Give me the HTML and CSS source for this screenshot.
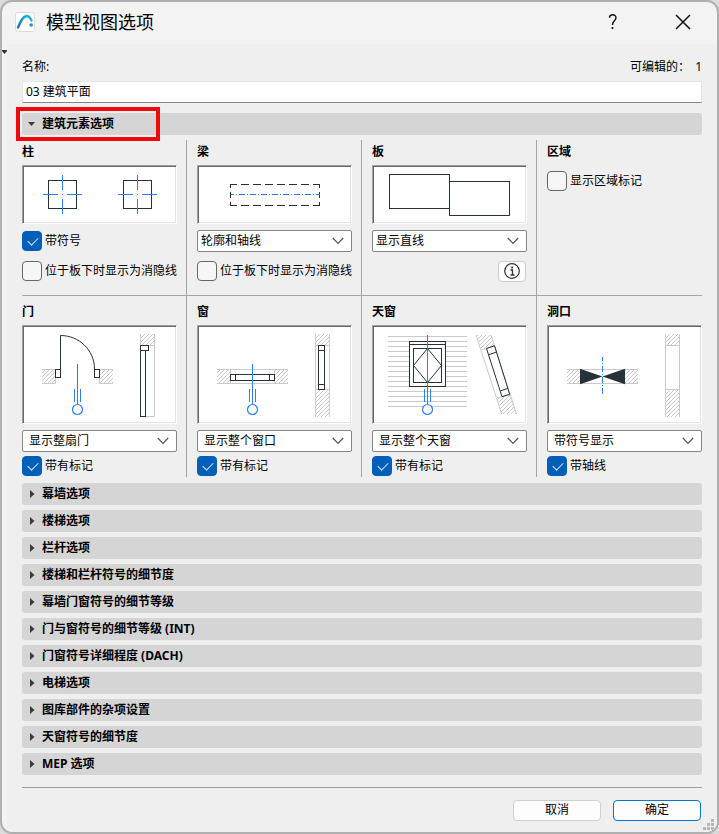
FILE: index.html
```html
<!DOCTYPE html>
<html lang="zh-CN">
<head>
<meta charset="utf-8">
<meta name="viewport" content="width=device-width, initial-scale=1">
<title>模型视图选项</title>
<link rel="stylesheet" href="styles.css">
</head>
<body>
<svg class="defs" aria-hidden="true">
  <defs>
    <pattern id="hatch" width="4" height="4" patternUnits="userSpaceOnUse">
      <path d="M-1 1 1 -1M0 4 4 0M3 5 5 3" stroke="#c8c8c8" stroke-width="1" fill="none"/>
    </pattern>
    <symbol id="chevron" viewBox="0 0 12 8"><path d="M.8 1 6 6.4 11.2 1" fill="none" stroke="#555" stroke-width="1.2"/></symbol>
    <symbol id="right" viewBox="0 0 5 8"><path d="M0 0 4.5 4 0 8z" fill="#3c3c3c"/></symbol>
    <symbol id="handle" viewBox="0 0 20 60">
      <path d="M10.5 5V45M7.5 30V43M13.5 30V43" fill="none" stroke="#2a7fff"/>
      <circle cx="10.5" cy="50.5" r="5" fill="#fff" stroke="#2a7fff" stroke-width="1.2"/>
    </symbol>
  </defs>
</svg>
<main class="window">
  <header class="titlebar">
    <svg class="logo" viewBox="0 0 20 20" aria-hidden="true">
      <defs><linearGradient id="arc" x1="0" y1="1" x2="1" y2="0"><stop offset="0" stop-color="#176fc0"/><stop offset="1" stop-color="#1fc0de"/></linearGradient></defs>
      <rect x=".5" y=".5" width="19" height="19" rx="2" fill="#fff" stroke="#dcdcdc"/>
      <path d="M3 15.5C5.5 9.500 7.5 4.5 11.5 4C14.5 4 15.5 6 16.5 8.5" fill="none" stroke="url(#arc)" stroke-width="2.4" stroke-linecap="round"/>
      <circle cx="16.2" cy="13" r="1.8" fill="#1e8fd0"/>
    </svg>
    <h1>模型视图选项</h1>
    <button class="caption" type="button" aria-label="帮助"><svg width="10" height="16" viewBox="0 0 10 16"><path d="M1.5 3.8C1.5 -.2 8 -.2 8 3.7C8 6.8 4.5 7 4.5 11" fill="none" stroke="#111" stroke-width="1.4"/><circle cx="4.5" cy="14" r="1.1" fill="#111"/></svg></button>
    <button class="caption close" type="button" aria-label="关闭"><svg width="16" height="16" viewBox="0 0 16 16"><path d="M1 1 15 15M15 1 1 15" stroke="#111" stroke-width="1.5"/></svg></button>
  </header>
  <div class="content">
    <svg class="edge-mark" viewBox="0 0 5 4" aria-hidden="true"><path d="M0 0H5V1L2.5 4 0 1z" fill="#333"/></svg>
    <div class="name-row"><label for="name">名称:</label><span>可编辑的：<b>1</b></span></div>
    <input id="name" class="name" type="text" value="03 建筑平面">

    <h2 class="bar first"><button type="button" aria-expanded="true"><svg class="down" viewBox="0 0 7 4"><path d="M0 0H7L3.5 4z" fill="#3c3c3c"/></svg>建筑元素选项</button><span class="highlight"></span></h2>

    <div class="grid">
      <section class="cell">
        <h3>柱</h3>
        <svg class="preview" viewBox="2 2 151 55" fill="none" stroke="#263238">
          <rect x="26.5" y="15.5" width="28" height="28"/><rect x="101.5" y="15.5" width="28" height="28"/>
          <path d="M21 29.5H36M40 29.5H41M45 29.5H60M40.5 10V25M40.5 34V49M96 29.5H111M115 29.5H116M120 29.5H135M115.5 10V25M115.5 34V49" stroke="#2a7fff"/>
        </svg>
        <label class="check"><input type="checkbox" checked>带符号</label>
        <label class="check"><input type="checkbox">位于板下时显示为消隐线</label>
      </section>
      <section class="cell">
        <h3>梁</h3>
        <svg class="preview" viewBox="2 2 151 55" fill="none" stroke="#263238">
          <path d="M33 19.5H123M33 40.5H123" stroke-dasharray="8 4" stroke-dashoffset="1"/>
          <path d="M33.5 19V23M33.5 27V33M33.5 37V41M122.5 19V23M122.5 27V33M122.5 37V41"/>
          <path d="M34 29.5H123" stroke="#2a7fff" stroke-dasharray="6 2 1 2" stroke-dashoffset="3"/>
        </svg>
        <div class="select"><select aria-label="梁"><option>轮廓和轴线</option></select><svg><use href="#chevron"/></svg></div>
        <label class="check"><input type="checkbox">位于板下时显示为消隐线</label>
      </section>
      <section class="cell">
        <h3>板</h3>
        <svg class="preview" viewBox="2 2 151 55" fill="none" stroke="#263238">
          <rect x="17.5" y="9.5" width="60" height="34"/><rect x="77.5" y="16.5" width="60" height="34"/>
        </svg>
        <div class="select"><select aria-label="板"><option>显示直线</option></select><svg><use href="#chevron"/></svg></div>
        <button class="info" type="button" aria-label="信息"><svg viewBox="0 0 16 16"><circle cx="8" cy="8" r="7.3" fill="none" stroke="#263238" stroke-width="1.2"/><path d="M6.5 7H8.5V12M6.5 12H10.5" fill="none" stroke="#263238" stroke-width="1.3"/><rect x="7.2" y="3.6" width="1.8" height="1.8" fill="#263238"/></svg></button>
      </section>
      <section class="cell">
        <h3>区域</h3>
        <label class="check zone"><input type="checkbox">显示区域标记</label>
      </section>
    </div>
    <div class="rule"></div>
    <div class="grid second">
      <section class="cell">
        <h3>门</h3>
        <svg class="preview" viewBox="2 2 151 95" fill="none" stroke="#263238">
          <g stroke="none" fill="url(#hatch)"><rect x="20" y="44" width="13" height="15"/><rect x="78" y="44" width="13" height="15"/><rect x="118" y="9" width="15" height="11"/></g>
          <path d="M20 44.5H33M20 58.5H33.5V53M91 44.5H78M91 58.5H77.5V53M118.5 9V20M132.5 9V91.5H123M126 20.5H132" stroke="#cacaca"/>
          <path d="M38.5 44V10.5C57 10.5 72.5 25 72.5 44"/>
          <rect x="33.5" y="44.5" width="5" height="8"/><rect x="72.5" y="44.5" width="5" height="8"/>
          <rect x="118.5" y="20.5" width="8" height="5"/><rect x="118.5" y="25.5" width="5" height="66"/>
          <use href="#handle" x="45" y="34" width="20" height="60"/>
        </svg>
        <div class="select inset"><select aria-label="门"><option>显示整扇门</option></select><svg><use href="#chevron"/></svg></div>
        <label class="check"><input type="checkbox" checked>带有标记</label>
      </section>
      <section class="cell">
        <h3>窗</h3>
        <svg class="preview" viewBox="2 2 151 95" fill="none" stroke="#263238">
          <g stroke="none" fill="url(#hatch)"><rect x="20" y="44" width="13" height="15"/><rect x="78" y="44" width="13" height="15"/><rect x="118" y="9" width="15" height="11"/><rect x="118" y="65" width="15" height="27"/></g>
          <path d="M20 44.5H91M20 58.5H91M33.5 44V59M77.5 44V59M118.5 9V92M132.5 9V92M118 20.5H133M118 64.5H133" stroke="#cacaca"/>
          <rect x="33.5" y="49.5" width="44" height="6"/><path d="M38.5 49V56M72.5 49V56"/>
          <rect x="121.5" y="20.5" width="6" height="44"/><path d="M121 25.5H128M121 59.5H128"/>
          <use href="#handle" x="45" y="34" width="20" height="60"/>
        </svg>
        <div class="select inset"><select aria-label="窗"><option>显示整个窗口</option></select><svg><use href="#chevron"/></svg></div>
        <label class="check"><input type="checkbox" checked>带有标记</label>
      </section>
      <section class="cell">
        <h3>天窗</h3>
        <svg class="preview" viewBox="2 2 151 95" fill="none" stroke="#263238">
          <path d="M16 11.5H95M16 16.5H95M16 21.5H95M16 26.5H95M16 31.5H95M16 36.5H95M16 41.5H95M16 46.5H95M16 51.5H95M16 56.5H95M16 61.5H95M16 66.5H95M16 71.5H95M16 76.5H95M16 81.5H95" stroke="#cacaca"/>
          <rect x="37.5" y="16.5" width="36" height="45" fill="#fff"/><path d="M37 19.5H74"/><rect x="41.5" y="23.5" width="28" height="34"/>
          <path d="M55.5 23.5 69.5 40.5 55.5 57.5 41.5 40.5z"/>
          <path d="M104 10H119L122.5 20.7 110 25zM125 73 137.7 69.5 144.5 89H129.7z" fill="url(#hatch)" stroke="none"/>
          <path d="M104 10 129.7 89M119 10 144.5 89M110 25 122.5 20.7M125 73 137.7 69.5" stroke="#cacaca"/>
          <path d="M114.5 23.5 122.5 20.7 137.7 69.3 130 71.7zM116.7 29.7 124.7 27M128.3 66 136 63.3"/>
          <path d="M55.5 10V40" stroke="#2a7fff"/>
          <use href="#handle" x="45" y="34" width="20" height="60"/>
        </svg>
        <div class="select inset"><select aria-label="天窗"><option>显示整个天窗</option></select><svg><use href="#chevron"/></svg></div>
        <label class="check"><input type="checkbox" checked>带有标记</label>
      </section>
      <section class="cell">
        <h3>洞口</h3>
        <svg class="preview" viewBox="2 2 151 95" fill="none" stroke="#263238">
          <g stroke="none" fill="url(#hatch)"><rect x="20" y="44" width="13" height="15"/><rect x="78" y="44" width="13" height="15"/><rect x="118" y="9" width="15" height="11"/><rect x="118" y="65" width="15" height="27"/></g>
          <path d="M20 44.5H91M20 58.5H91M118.5 9V92M132.5 9V92M118 20.5H133M118 64.5H133" stroke="#cacaca"/>
          <path d="M33 43.7 55.5 51.5 33 59.2zM78 43.7 55.5 51.5 78 59.2z" fill="#263238" stroke="none"/>
          <path d="M55.5 32V71" stroke="#2a7fff" stroke-dasharray="6 2 1 2" stroke-dashoffset="2"/>
        </svg>
        <div class="select inset"><select aria-label="洞口"><option>带符号显示</option></select><svg><use href="#chevron"/></svg></div>
        <label class="check"><input type="checkbox" checked>带轴线</label>
      </section>
    </div>

    <div class="bars">
      <h2 class="bar"><button type="button" aria-expanded="false"><svg class="right"><use href="#right"/></svg>幕墙选项</button></h2>
      <h2 class="bar"><button type="button" aria-expanded="false"><svg class="right"><use href="#right"/></svg>楼梯选项</button></h2>
      <h2 class="bar"><button type="button" aria-expanded="false"><svg class="right"><use href="#right"/></svg>栏杆选项</button></h2>
      <h2 class="bar"><button type="button" aria-expanded="false"><svg class="right"><use href="#right"/></svg>楼梯和栏杆符号的细节度</button></h2>
      <h2 class="bar"><button type="button" aria-expanded="false"><svg class="right"><use href="#right"/></svg>幕墙门窗符号的细节等级</button></h2>
      <h2 class="bar"><button type="button" aria-expanded="false"><svg class="right"><use href="#right"/></svg>门与窗符号的细节等级 (INT)</button></h2>
      <h2 class="bar"><button type="button" aria-expanded="false"><svg class="right"><use href="#right"/></svg>门窗符号详细程度 (DACH)</button></h2>
      <h2 class="bar"><button type="button" aria-expanded="false"><svg class="right"><use href="#right"/></svg>电梯选项</button></h2>
      <h2 class="bar"><button type="button" aria-expanded="false"><svg class="right"><use href="#right"/></svg>图库部件的杂项设置</button></h2>
      <h2 class="bar"><button type="button" aria-expanded="false"><svg class="right"><use href="#right"/></svg>天窗符号的细节度</button></h2>
      <h2 class="bar"><button type="button" aria-expanded="false"><svg class="right"><use href="#right"/></svg>MEP 选项</button></h2>
    </div>
    <footer class="footer">
      <button type="button">取消</button>
      <button class="primary" type="button">确定</button>
    </footer>
    <svg class="grip" viewBox="0 0 11 11" aria-hidden="true"><path d="M8 0h3v3h-3zM4 4h3v3h-3zM8 4h3v3h-3zM0 8h3v3h-3zM4 8h3v3h-3zM8 8h3v3h-3z" fill="#b4b4b4"/></svg>
  </div>
</main>
</body>
</html>
```
FILE: styles.css
```css
* { box-sizing: border-box; }

body {
  margin: 0;
  background: #dcdcdc;
  color: #000;
  font: 12px/16px "Noto Sans", "Noto Sans CJK SC", sans-serif;
}

button, input, select { font: inherit; color: inherit; }
h1, h2, h3 { margin: 0; font-size: 12px; }
.defs { position: absolute; width: 0; height: 0; }

.window {
  display: flex;
  flex-direction: column;
  min-height: 100vh;
  overflow: hidden;
  border: 2px solid #b0b0b0;
  border-radius: 12px;
  background: #f3f3f3;
}

.titlebar {
  display: flex;
  align-items: center;
  height: 42px;
  padding: 0 14px 2px 13px;
}
.logo { width: 20px; height: 20px; margin-right: 11px; }
.titlebar h1 { flex: 1; font-size: 18px; line-height: 24px; font-weight: 400; }
.caption {
  display: grid;
  place-items: center;
  width: 40px;
  height: 32px;
  padding: 0;
  border: 0;
  background: none;
}
.close { margin-left: 30px; }

.content {
  position: relative;
  flex: 1;
  margin-left: 5px;
  padding: 15px 15px 11px;
  background: #efefef;
}
.edge-mark { position: absolute; left: -5px; top: 6px; width: 5px; height: 4px; }

.name-row { display: flex; justify-content: space-between; margin-bottom: 6px; }
.name-row b { margin-left: 5px; font-weight: 400; }
.name {
  display: block;
  width: 100%;
  height: 22px;
  padding: 0 3px 2px;
  border: 1px solid #e5e5e5;
  border-bottom-color: #868686;
  background: #fff;
}

.bar {
  position: relative;
  height: 22px;
  border-radius: 3px;
  background: #d5d5d5;
}
.bar button {
  display: flex;
  align-items: center;
  width: 100%;
  height: 100%;
  padding: 0 6px;
  border: 0;
  background: none;
  font-weight: 700;
}
.first { margin-top: 10px; }
.down { width: 7px; height: 4px; margin-right: 7px; }
.right { width: 5px; height: 8px; margin: 0 7px 0 2px; }
.highlight {
  position: absolute;
  z-index: 1;
  left: -6px;
  top: -6px;
  width: 144px;
  height: 34px;
  border: 4px solid #ee0a0a;
}

.grid {
  display: grid;
  grid-template-columns: repeat(4, 1fr);
  margin: 5px -10px 0;
}
.cell {
  display: flex;
  flex-direction: column;
  padding: 4px 9px 13px 10px;
  border-right: 1px solid #a5a5a5;
}
.cell:last-child { border-right-color: transparent; }
.cell h3 { margin-bottom: 5px; }
.rule { height: 1px; background: #a5a5a5; }
.second { margin-top: 0; }
.second .cell { padding-top: 8px; padding-bottom: 1px; }

.preview {
  display: block;
  width: 100%;
  padding: 1px;
  margin-bottom: 6px;
  border: 1px solid #a0a0a0;
  border-right-color: #fff;
  border-bottom-color: #fff;
  background: #fff;
  box-shadow: inset 1px 1px #696969, inset -1px -1px #e3e3e3;
}

.check { display: flex; align-items: center; gap: 3px; height: 20px; white-space: nowrap; }
.check input {
  appearance: none;
  flex: none;
  width: 20px;
  height: 20px;
  margin: 0;
  border: 1px solid #666;
  border-radius: 4px;
  background: #f6f6f6;
}
.check input:checked { border-color: #005fb8; background: #005fb8; }
.check input:checked::before {
  content: "";
  display: block;
  width: 9px;
  height: 5px;
  margin: 5px;
  border: solid #d6e6f5;
  border-width: 0 0 1px 1px;
  transform: rotate(-45deg);
}
.preview + .check { margin-top: 1px; }
.check + .check { margin-top: 10px; }
.select + .check { margin-top: 9px; }
.second .select + .check { margin-top: 4px; }
.zone { margin-top: 6px; }

.select { position: relative; }
.select select {
  appearance: none;
  display: block;
  width: 100%;
  height: 22px;
  padding: 0 24px 0 3px;
  border: 1px solid #868686;
  border-radius: 2px;
  background: #fff;
}
.inset select { padding-left: 6px; }
.select svg {
  position: absolute;
  right: 8px;
  top: 7px;
  width: 12px;
  height: 8px;
  pointer-events: none;
}

.info {
  display: grid;
  place-items: center;
  align-self: flex-end;
  width: 28px;
  height: 21px;
  margin: 9px 1px 0 0;
  padding: 0;
  border: 1px solid #ccc;
  border-radius: 4px;
  background: #fdfdfd;
}
.info svg { width: 16px; height: 16px; }

.bars { display: grid; gap: 5px; margin-top: 6px; }

.footer {
  display: flex;
  justify-content: flex-end;
  gap: 12px;
  margin-top: 12px;
  padding: 12px 1px 0 0;
  border-top: 1px solid #a0a0a0;
}
.footer button {
  width: 88px;
  height: 21px;
  padding: 0;
  border: 1px solid #d0d0d0;
  border-radius: 4px;
  background: #fdfdfd;
}
.footer .primary { border-color: #0078d4; }
.grip { position: absolute; right: 3px; bottom: 2px; width: 11px; height: 11px; }
```
